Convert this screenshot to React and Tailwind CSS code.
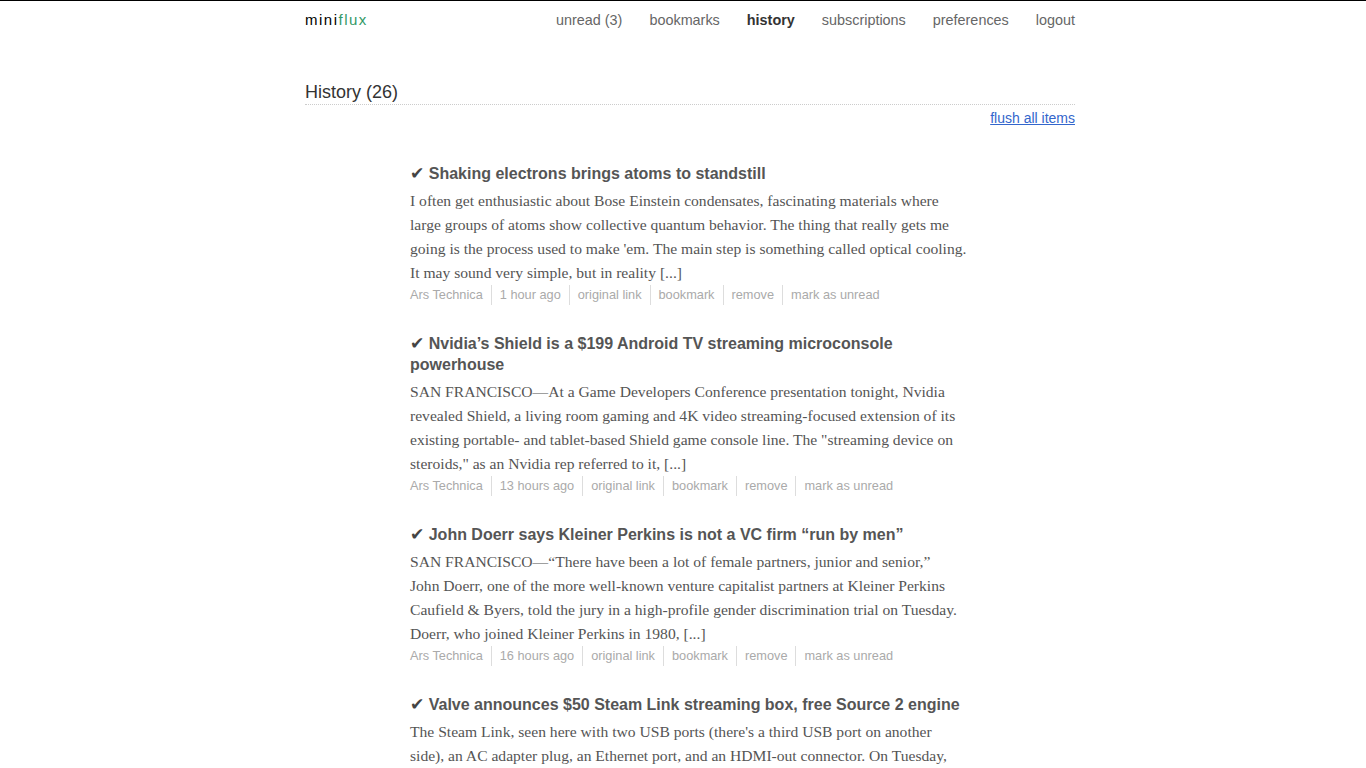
const navItems = [
  { label: "unread (3)" },
  { label: "bookmarks" },
  { label: "history", active: true },
  { label: "subscriptions" },
  { label: "preferences" },
  { label: "logout" },
];

// body text is kept in the lines the original page wraps it into
const items = [
  {
    title: "Shaking electrons brings atoms to standstill",
    lines: [
      "I often get enthusiastic about Bose Einstein condensates, fascinating materials where",
      "large groups of atoms show collective quantum behavior. The thing that really gets me",
      "going is the process used to make 'em. The main step is something called optical cooling.",
      "It may sound very simple, but in reality [...]",
    ],
    feed: "Ars Technica",
    ago: "1 hour ago",
  },
  {
    title: "Nvidia’s Shield is a $199 Android TV streaming microconsole powerhouse",
    lines: [
      "SAN FRANCISCO—At a Game Developers Conference presentation tonight, Nvidia",
      "revealed Shield, a living room gaming and 4K video streaming-focused extension of its",
      "existing portable- and tablet-based Shield game console line. The \"streaming device on",
      "steroids,\" as an Nvidia rep referred to it, [...]",
    ],
    feed: "Ars Technica",
    ago: "13 hours ago",
  },
  {
    title: "John Doerr says Kleiner Perkins is not a VC firm “run by men”",
    lines: [
      "SAN FRANCISCO—“There have been a lot of female partners, junior and senior,”",
      "John Doerr, one of the more well-known venture capitalist partners at Kleiner Perkins",
      "Caufield & Byers, told the jury in a high-profile gender discrimination trial on Tuesday.",
      "Doerr, who joined Kleiner Perkins in 1980, [...]",
    ],
    feed: "Ars Technica",
    ago: "16 hours ago",
  },
  {
    title: "Valve announces $50 Steam Link streaming box, free Source 2 engine",
    lines: [
      "The Steam Link, seen here with two USB ports (there's a third USB port on another",
      "side), an AC adapter plug, an Ethernet port, and an HDMI-out connector. On Tuesday,",
      "Valve announced a new piece of hardware for the living room, the Steam Link, and",
      "a free version of its Source 2 engine for developers [...]",
    ],
    feed: "Ars Technica",
    ago: "18 hours ago",
  },
];

function Item({ item }) {
  const meta = [item.feed, item.ago, "original link", "bookmark", "remove", "mark as unread"];
  return (
    <article className="mb-[28px]">
      <h2 className="text-[16px] font-bold leading-[21px] text-[#555]">
        <span className="font-['DejaVu_Sans',sans-serif] text-[17px] font-bold text-[#444]">✔</span> {item.title}
      </h2>
      <p className="mt-[5px] font-['Liberation_Serif',serif] text-[15.6px] leading-[24px] text-[#555]">
        {item.lines.map((l, i) => (
          <span key={i} className="block whitespace-nowrap">
            {l}
          </span>
        ))}
      </p>
      <ul className="flex text-[12.75px] leading-[20px] text-[#aaa]">
        {meta.map((m, i) => (
          <li key={m} className={i === 0 ? "pr-2" : "border-l border-[#ddd] px-2"}>
            {m}
          </li>
        ))}
      </ul>
    </article>
  );
}

export default function App() {
  return (
    <div className="min-h-screen border-t border-black bg-white font-['Liberation_Sans',Arial,sans-serif]">
      <div className="mx-auto w-[784px] pl-[14px]">
        {/* header */}
        <header className="flex h-[39px] items-center justify-between">
          <div className="text-[15px] tracking-[1.5px]">
            <span className="text-black">mini</span>
            <span className="text-[#339966]">flux</span>
          </div>
          <nav className="flex gap-[27px] text-[14.4px] text-[#666]">
            {navItems.map((n) => (
              <a key={n.label} className={n.active ? "font-bold text-[#333]" : ""}>
                {n.label}
              </a>
            ))}
          </nav>
        </header>

        <div className="mt-[41px] border-b border-dotted border-[#ccc] pb-px">
          <h1 className="text-[18px] leading-[22px] text-[#333]">History (26)</h1>
        </div>
        <div className="flex justify-end pt-[3px] text-[14px] leading-[20px]">
          <a className="text-[#3366cc] underline">flush all items</a>
        </div>

        <section className="ml-[105px] mt-[35px] w-[562px]">
          {items.map((it) => (
            <Item key={it.title} item={it} />
          ))}
        </section>
      </div>
    </div>
  );
}
